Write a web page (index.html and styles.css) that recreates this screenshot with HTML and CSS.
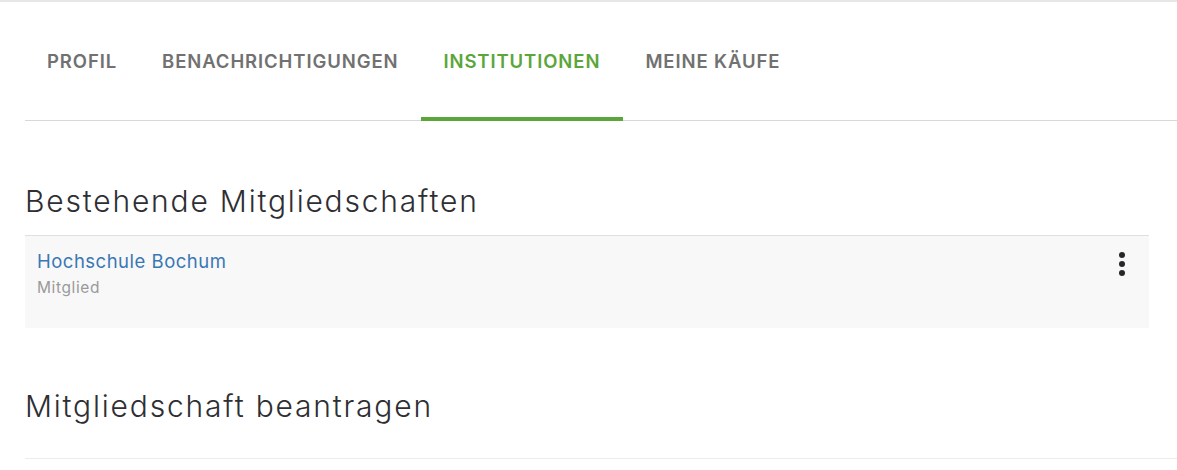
FILE: index.html
```html
<!DOCTYPE html>
<html lang="de">
<head>
  <meta charset="UTF-8">
  <title>Institutionen</title>
  <link rel="stylesheet" href="styles.css">
</head>
<body>
  <div class="page">
    <nav class="tabs">
      <a class="tab" href="#">PROFIL</a>
      <a class="tab" href="#">BENACHRICHTIGUNGEN</a>
      <a class="tab active" href="#">INSTITUTIONEN</a>
      <a class="tab" href="#">MEINE KÄUFE</a>
    </nav>

    <section class="section">
      <h2>Bestehende Mitgliedschaften</h2>
      <div class="membership">
        <div class="membership-info">
          <a class="inst-name" href="#">Hochschule Bochum</a>
          <div class="role">Mitglied</div>
        </div>
        <button class="menu-btn" aria-label="Optionen">
          <span></span><span></span><span></span>
        </button>
      </div>
    </section>

    <section class="section apply">
      <h2>Mitgliedschaft beantragen</h2>
      <div class="rule"></div>
    </section>
  </div>
</body>
</html>
```

FILE: styles.css
```css
body { margin: 0; font-family: Inter, Lato, sans-serif; background: #fff; color: #333; border-top: 2px solid #e6e6e6; }
.page { padding: 0 0 0 25px; }
a { text-decoration: none; }

.tabs { display: flex; border-bottom: 1px solid #d8d8d8; height: 118px; }
.tab { display: flex; align-items: center; padding: 0 23px 0 22px; font-size: 18.5px; letter-spacing: 0.9px; font-weight: 600; color: #717171; border-bottom: 4px solid transparent; margin-bottom: -1px; padding-top: 2px; }
.tab.active { color: #5ba63b; border-bottom-color: #5ba63b; }

h2 { margin: 0; font-size: 30px; letter-spacing: 1.8px; font-weight: 300; color: #2e2e33; }
.section { padding-right: 28px; }
.section h2 { padding-top: 60px; padding-bottom: 14px; line-height: 40px; }

.membership { display: flex; justify-content: space-between; background: #f8f8f8; border-top: 1px solid #e0e0e0; padding: 12px 24px 30px 12px; height: 50px; }
.inst-name { font-size: 18.5px; letter-spacing: 0.5px; color: #3a77b4; line-height: 26px; }
.role { font-size: 15.5px; letter-spacing: 0.6px; color: #9a9a9a; margin-top: 4px; }

.menu-btn { display: flex; flex-direction: column; gap: 3px; background: none; border: 0; padding: 4px 0 0; cursor: pointer; height: 30px; }
.menu-btn span { width: 6px; height: 6px; border-radius: 50%; background: #26262b; }

.apply h2 { padding-top: 58px; padding-bottom: 32px; }
.rule { border-top: 1px solid #ececec; margin-right: -28px; }
```
